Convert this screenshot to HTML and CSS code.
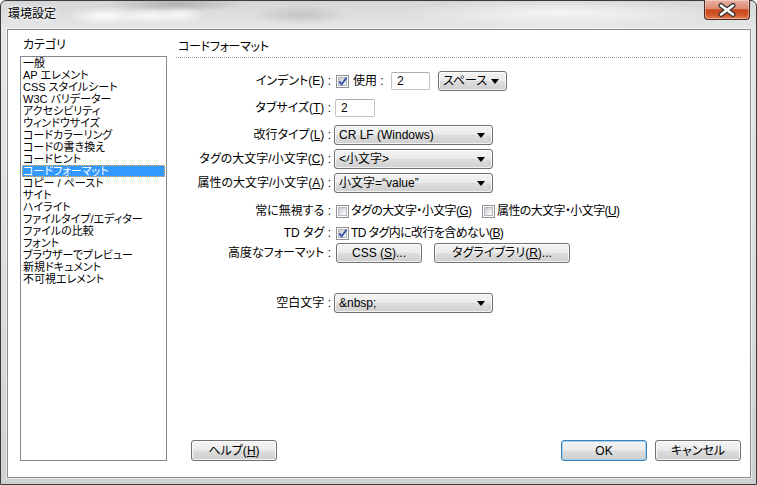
FILE: index.html
```html
<!DOCTYPE html>
<html lang="ja">
<head>
  <meta charset="UTF-8" />
  <title>環境設定</title>
  <link rel="stylesheet" href="styles.css">
</head>
<body>
  <div class="ventana">
    <div class="barra-titulo">
      <span class="titulo">環境設定</span>
      <button class="cerrar-btn" title="閉じる">
        <svg width="44" height="18" viewBox="0 0 44 18">
          <path d="M16 4.5 L28 13.5 M28 4.5 L16 13.5" stroke="#333" stroke-width="5" stroke-linecap="round" fill="none"/>
          <path d="M16 4.5 L28 13.5 M28 4.5 L16 13.5" stroke="#fff" stroke-width="2.6" stroke-linecap="round" fill="none"/>
        </svg>
      </button>
    </div>

    <div class="cliente">
      <div class="lateral">
        <div class="lateral-etiqueta">カテゴリ</div>
        <ul class="lista">
          <li>一般</li>
          <li>AP エレメント</li>
          <li>CSS スタイルシート</li>
          <li>W3C バリデーター</li>
          <li>アクセシビリティ</li>
          <li>ウィンドウサイズ</li>
          <li>コードカラーリング</li>
          <li>コードの書き換え</li>
          <li>コードヒント</li>
          <li class="activo">コードフォーマット</li>
          <li>コピー / ペースト</li>
          <li>サイト</li>
          <li>ハイライト</li>
          <li>ファイルタイプ/エディター</li>
          <li>ファイルの比較</li>
          <li>フォント</li>
          <li>ブラウザーでプレビュー</li>
          <li>新規ドキュメント</li>
          <li>不可視エレメント</li>
        </ul>
      </div>

      <div class="panel">
        <h2 class="panel-titulo">コードフォーマット</h2>

        <div class="fila f1">
          <span class="etiqueta">インデント(E) :</span>
          <div class="controles">
            <span class="check marcado"><svg width="13" height="13" viewBox="0 0 13 13"><path d="M3.2 6.4 L5.6 9.4 L10.6 2.6" stroke="#3a5aa8" stroke-width="1.9" fill="none"/></svg></span>
            <span class="texto usar">使用 :</span>
            <span class="caja ancho-indent">2</span>
            <span class="selector ancho-espacio">スペース</span>
          </div>
        </div>

        <div class="fila f2">
          <span class="etiqueta">タブサイズ(<u>T</u>) :</span>
          <div class="controles">
            <span class="caja ancho-tab">2</span>
          </div>
        </div>

        <div class="fila f3">
          <span class="etiqueta">改行タイプ(<u>L</u>) :</span>
          <div class="controles">
            <span class="selector ancho-largo">CR LF (Windows)</span>
          </div>
        </div>

        <div class="fila f4">
          <span class="etiqueta">タグの大文字/小文字(<u>C</u>) :</span>
          <div class="controles">
            <span class="selector ancho-largo">&lt;小文字&gt;</span>
          </div>
        </div>

        <div class="fila f5">
          <span class="etiqueta">属性の大文字/小文字(<u>A</u>) :</span>
          <div class="controles">
            <span class="selector ancho-largo">小文字=“value”</span>
          </div>
        </div>

        <div class="fila f6">
          <span class="etiqueta">常に無視する :</span>
          <div class="controles">
            <span class="opcion primera"><span class="check"></span><span class="texto">タグの大文字・小文字(<u>G</u>)</span></span>
            <span class="opcion"><span class="check"></span><span class="texto">属性の大文字・小文字(<u>U</u>)</span></span>
          </div>
        </div>

        <div class="fila f7">
          <span class="etiqueta">TD タグ :</span>
          <div class="controles">
            <span class="opcion"><span class="check marcado"><svg width="13" height="13" viewBox="0 0 13 13"><path d="M3.2 6.4 L5.6 9.4 L10.6 2.6" stroke="#3a5aa8" stroke-width="1.9" fill="none"/></svg></span><span class="texto">TD タグ内に改行を含めない(<u>B</u>)</span></span>
          </div>
        </div>

        <div class="fila f8">
          <span class="etiqueta">高度なフォーマット :</span>
          <div class="controles">
            <button class="boton ancho-css">CSS (<u>S</u>)...</button>
            <button class="boton ancho-tags">タグライブラリ(<u>R</u>)...</button>
          </div>
        </div>

        <div class="fila f9">
          <span class="etiqueta">空白文字 :</span>
          <div class="controles">
            <span class="selector ancho-largo">&amp;nbsp;</span>
          </div>
        </div>

        <div class="pie">
          <button class="boton ancho-pie ayuda">ヘルプ(<u>H</u>)</button>
          <button class="boton ancho-pie defecto">OK</button>
          <button class="boton ancho-pie">キャンセル</button>
        </div>
      </div>
    </div>
  </div>
</body>
</html>
```

FILE: styles.css
```css
* {
  box-sizing: border-box;
  margin: 0;
  padding: 0;
}

body {
  font-family: "Liberation Sans", "Noto Sans CJK JP", sans-serif;
  font-size: 12px;
  font-feature-settings: "palt" 1;
  color: #000;
  background: #fff;
}

u {
  text-decoration: underline;
  text-underline-offset: 1px;
}

.ventana {
  width: 757px;
  height: 485px;
  border: 1px solid #3a3a3a;
  border-radius: 6px 6px 0 0;
  padding: 0 5px 6px 6px;
  display: flex;
  flex-direction: column;
  background:
    radial-gradient(ellipse 40px 9px at 105px 15px, rgba(255,255,255,.9), transparent),
    radial-gradient(ellipse 30px 8px at 150px 15px, rgba(255,255,255,.8), transparent),
    radial-gradient(ellipse 24px 8px at 180px 14px, rgba(255,255,255,.8), transparent),
    radial-gradient(ellipse 70px 8px at 175px 3px, rgba(150,150,150,.6), transparent),
    radial-gradient(ellipse 50px 10px at 300px 14px, rgba(170,170,170,.5), transparent),
    radial-gradient(ellipse 160px 14px at 560px 12px, rgba(255,255,255,.7), transparent),
    linear-gradient(180deg, #d4d6d8 0%, #e6e7e8 28px, #dcdddf 60%, #cfd0d2 100%);
}

.barra-titulo {
  height: 28px;
  display: flex;
  justify-content: space-between;
  align-items: flex-start;
}

.titulo {
  margin: 6px 0 0 1px;
  line-height: 14px;
  font-size: 12px;
  text-shadow: 0 0 6px #fff, 0 0 3px #fff;
}

.cerrar-btn {
  width: 46px;
  height: 20px;
  margin: -1px 1px 0 0;
  border: 1px solid #4b2a20;
  border-top: none;
  border-radius: 0 0 4px 4px;
  background: linear-gradient(180deg, #eab1a1 0%, #dd8c74 45%, #c8441c 52%, #d35a2e 80%, #e58256 100%);
  box-shadow: inset 0 0 0 1px rgba(255,255,255,.35);
  display: flex;
  align-items: center;
  justify-content: center;
  cursor: pointer;
}

.cliente {
  flex: 1;
  display: flex;
  gap: 9px;
  background: #fff;
  border: 1px solid #8a8a8a;
  box-shadow: 0 0 0 1px rgba(255,255,255,.55);
  padding: 9px 9px 16px 12px;
}

/* lista de categorias */
.lateral {
  width: 147px;
  display: flex;
  flex-direction: column;
}

.lateral-etiqueta {
  line-height: 12px;
  padding-left: 3px;
  margin-bottom: 5px;
}

.lista {
  flex: 1;
  list-style: none;
  border: 1px solid #828790;
  padding: 0 1px;
  font-size: 11px;
}

.lista li {
  line-height: 12px;
  height: 12px;
  padding-left: 1px;
  white-space: nowrap;
  overflow: hidden;
}

.lista li.activo {
  background: #3399ff;
  color: #fff;
  outline: 1px dotted #f5b060;
  outline-offset: -1px;
}

/* panel derecho */
.panel {
  flex: 1;
  display: flex;
  flex-direction: column;
  padding-top: 2px;
}

.panel-titulo {
  font-size: 12px;
  font-weight: normal;
  line-height: 12px;
  padding: 0 0 4px 2px;
  border-bottom: 1px dotted #9a9a9a;
  margin-bottom: 13px;
  letter-spacing: -0.3px;
}

.fila {
  height: 20px;
  display: flex;
  align-items: center;
}

.f2, .f3 { margin-top: 7px; }
.f4, .f5 { margin-top: 4px; }
.f6 { margin-top: 8px; }
.f7 { margin-top: 2px; }
.f9 { margin-top: 30px; }

.etiqueta {
  width: 155px;
  text-align: right;
  white-space: nowrap;
  line-height: 14px;
}

.controles {
  margin-left: 4px;
  display: flex;
  align-items: center;
}

.texto {
  white-space: nowrap;
  line-height: 14px;
}

.usar {
  width: 34px;
  margin-left: 4px;
}

.check {
  width: 13px;
  height: 13px;
  margin-left: 1px;
  border: 1px solid #8f8f8f;
  background: #f4f4f4;
  box-shadow: inset 0 0 0 1px #fff, inset 0 0 0 2px #b4b8bd;
  background-image: linear-gradient(135deg, #cfd3d8 20%, #f7f7f7 80%);
  background-size: 7px 7px;
  background-position: 2px 2px;
  background-repeat: no-repeat;
  position: relative;
  flex-shrink: 0;
}

.check svg {
  position: absolute;
  top: -1px;
  left: -1px;
}

.opcion {
  display: flex;
  align-items: center;
}

.opcion .texto {
  margin-left: 2px;
  letter-spacing: -0.6px;
}

.primera {
  width: 146px;
  overflow: hidden;
}

.caja {
  height: 18px;
  border: 1px solid #c4c4c4;
  border-top-color: #a9abb0;
  border-radius: 2px;
  padding-left: 5px;
  line-height: 16px;
  background: #fff;
}

.ancho-indent {
  width: 39px;
  margin-left: 4px;
}

.ancho-tab {
  width: 40px;
}

.selector,
.boton {
  height: 20px;
  border: 1px solid #707070;
  border-radius: 3px;
  background: linear-gradient(180deg, #f3f3f3 0%, #ebebeb 48%, #dddddd 52%, #cfcfcf 100%);
  box-shadow: inset 0 0 0 1px rgba(255,255,255,.75);
  font-family: inherit;
  font-size: 12px;
  font-feature-settings: "palt" 1;
  color: #000;
  line-height: 18px;
  white-space: nowrap;
}

.selector {
  position: relative;
  padding-left: 4px;
}

.selector::after {
  content: "";
  position: absolute;
  right: 7px;
  top: 7px;
  border-left: 4px solid transparent;
  border-right: 4px solid transparent;
  border-top: 5px solid #000;
}

.ancho-espacio {
  width: 69px;
  margin-left: 8px;
}

.ancho-largo {
  width: 159px;
  margin-left: -1px;
}

.boton {
  text-align: center;
  cursor: pointer;
}

.ancho-css {
  width: 86px;
  margin-left: 1px;
}

.ancho-tags {
  width: 136px;
  margin-left: 12px;
}

.pie {
  margin-top: auto;
  display: flex;
  gap: 8px;
}

.ancho-pie {
  width: 86px;
  height: 21px;
}

.ayuda {
  margin-left: 15px;
  margin-right: auto;
}

.defecto {
  border-color: #3c7fb1;
  box-shadow: inset 0 0 0 1px #9fd3f5;
}
```
